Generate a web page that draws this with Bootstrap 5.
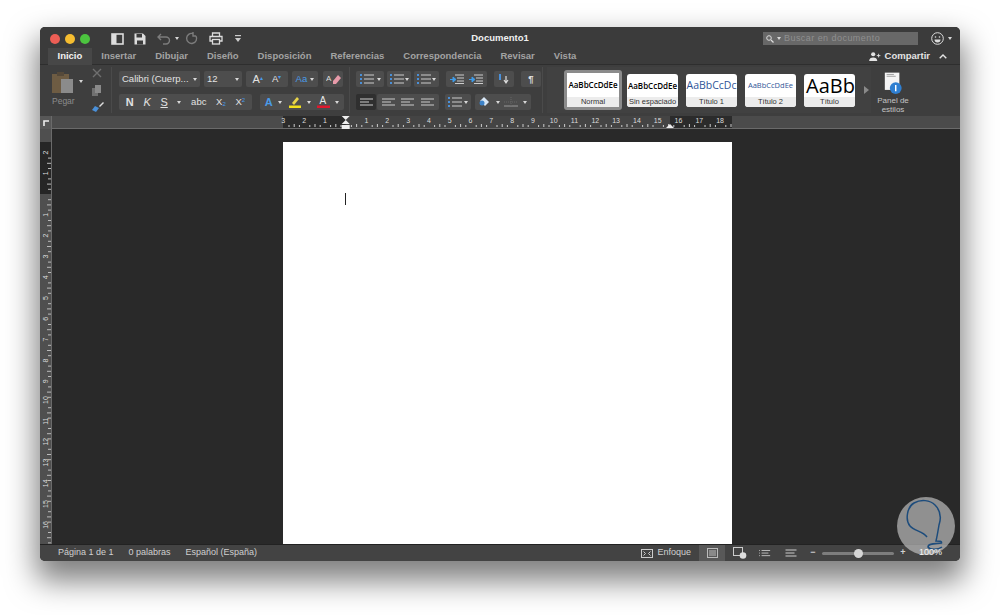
<!DOCTYPE html>
<html lang="es">
<head>
<meta charset="UTF-8">
<title>Documento1</title>
<link rel="stylesheet" href="https://cdn.jsdelivr.net/npm/bootstrap@5.3.0/dist/css/bootstrap.min.css">
<style>
html, body { height: 615px; overflow: hidden; background: #fff; }
body { font-family: "Liberation Sans", Arial, sans-serif; padding: 27px 40px 0; }
svg { display: block; }
.word-win { width: 920px; height: 534px; border-radius: 5px; overflow: hidden; background: #292929; box-shadow: 0 16px 30px 4px rgba(0,0,0,.5); position: relative; color: #d8d8d8; }
.title-row { height: 21px; background: #3b3b3b; display: grid; grid-template-columns: 1fr auto 1fr; align-items: center; flex: none; padding-top: 2px; }
.doc-title { color: #f0f0f0; font-size: 9.5px; font-weight: 700; }
.lights { margin-left: 10px; gap: 5px; }
.light-dot { width: 10px; height: 10px; border-radius: 50%; }
.dot-r { background: #ed5e55; } .dot-y { background: #f5bd30; } .dot-g { background: #4cc43f; }
.quick-bar { margin-left: 21px; }
.qa-side { margin-right: 10px; } .qa-save { margin-right: 11px; } .qa-caret { margin: 0 6px 0 4px; } .qa-redo { margin-right: 10px; } .qa-print { margin-right: 8px; }
.search-box { width: 155px; height: 13px; background: #686868; color: #8f8f8f; font-size: 9px; letter-spacing: .45px; padding-left: 3px; margin-right: 13px; gap: 3px; }
.tab-row { height: 17px; background: #3b3b3b; padding-left: 8px; flex: none; border-bottom: 1px solid #2e2e2e; }
.tab-item { padding: 0 9.5px; height: 17px; line-height: 16px; font-size: 9.5px; font-weight: 700; color: #a3a3a3; white-space: nowrap; }
.tab-on { background: #474747; color: #f2f2f2; }
.share-lnk { color: #e4e4e4; font-size: 9.5px; font-weight: 700; padding-right: 13px; height: 16px; }
.share-up { margin-left: 5px; }
.ribbon-row { height: 51px; background: #3e3e3e; flex: none; position: relative; }
.rb-clip { width: 72px; padding: 5px 0 0 12px; border-right: 1px solid #4a4a4a; flex: none; height: 46px; margin-top: 2px; }
.pegar-lbl { font-size: 8.5px; color: #8c8c8c; margin-top: 2px; }
.clip-tools { margin: -4px 0 0 9px; }
.tool-gap1 { margin-top: 7px; } .tool-gap2 { margin-top: 6px; }
.rb-font { width: 238px; padding: 4px 0 0 7px; border-right: 1px solid #4a4a4a; flex: none; height: 46px; margin-top: 2px; }
.rb-para { width: 193px; padding: 4px 0 0 6px; border-right: 1px solid #4a4a4a; flex: none; height: 46px; margin-top: 2px; }
.btn-line { height: 16px; margin-bottom: 7px; gap: 4px; }
.rb-box { height: 16px; background: #4d4d4d; border-radius: 2px; color: #e2e2e2; font-size: 9.5px; display: flex; align-items: center; justify-content: space-around; flex: none; white-space: nowrap; padding: 0 2px; }
.rb-left { justify-content: space-between; padding: 0 3px; }
.rb-dark { background: #2f2f2f; }
.w20 { width: 20px; } .w24 { width: 24px; } .w25 { width: 25px; } .w26 { width: 26px; } .w28 { width: 28px; } .w38 { width: 38px; }
.w41 { width: 41px; } .w42 { width: 42px; } .w56 { width: 56px; } .w62 { width: 62px; } .w81 { width: 81px; } .w84 { width: 84px; } .w133 { width: 133px; }
.rb-gap1 { margin-left: 1px; } .rb-gap2 { margin-left: 2px; } .rb-snug { margin-left: -3px; } .btn-line-tight { gap: 3px; }
.ink-blue { color: #4a9be8; }
.big-a { font-size: 11px; }
.rb-box sup, .rb-box sub { font-size: 6px; line-height: 0; }
.caret-mini { width: 0; height: 0; border-left: 2px solid transparent; border-right: 2px solid transparent; border-top: 3px solid #d8d8d8; flex: none; }
.gallery { width: 324px; height: 46px; margin: 2px 0 0 4px; background: #414141; flex: none; padding-left: 17px; }
.style-card { width: 51px; height: 33px; background: #fff; border-radius: 3px; overflow: hidden; flex: none; margin-right: 8px; color: #000; }
.style-card.card-on { width: 58px; height: 40px; border: 3px solid #8b8b8b; margin-right: 5px; }
.style-sample { height: 23px; line-height: 23px; overflow: hidden; white-space: nowrap; text-align: center; font-family: "Open Sans", sans-serif; font-size: 8px; font-weight: 600; }
.card-on .style-sample { height: 24px; line-height: 24px; }
.style-name { height: 10px; line-height: 10px; background: #ececec; color: #333; font-size: 7.5px; text-align: center; white-space: nowrap; overflow: hidden; }
.sample-h1 { color: #2f5597; font-size: 10.5px; font-weight: 400; }
.sample-h2 { color: #2f5597; font-size: 7.5px; font-weight: 400; }
.sample-t { font-size: 20px; font-weight: 400; text-align: left; padding-left: 2px; }
.gallery-next { width: 0; height: 0; border-top: 4px solid transparent; border-bottom: 4px solid transparent; border-left: 5px solid #8a8a8a; margin-left: 1px; flex: none; }
.panel-btn { width: 44px; font-size: 8px; line-height: 9px; color: #c4c4c4; text-align: center; flex: none; padding-top: 7px; }
.ruler-row { height: 13px; background: #4b4b4b; flex: none; border-bottom: 1px solid #6a6a6a; }
.ruler-corner { width: 12px; height: 13px; background: #575757; border-right: 1px solid #6a6a6a; flex: none; }
.doc-row { height: 415px; flex: none; }
.v-ruler { width: 12px; height: 415px; flex: none; background: #4f4f4f; border-right: 1px solid #6a6a6a; }
.work-area { padding: 13px 0 0 231px; overflow: hidden; }
.doc-page { width: 449px; height: 402px; background: #fff; padding: 51px 0 0 62px; flex: none; }
.text-caret { width: 1px; height: 12px; background: #222; }
.status-row { height: 17px; background: #434343; flex: none; font-size: 9px; color: #d0d0d0; border-top: 1px solid #222; }
.st-txt { white-space: nowrap; }
.st-pag { margin-left: 18px; } .st-pal { margin-left: 15px; } .st-idi { margin-left: 15px; }
.st-view { height: 16px; width: 26px; background: #585858; margin: 0 8px; }
.st-web { margin-right: 12px; } .st-outline { margin-right: 14px; } .st-draft { margin-right: 13px; }
.st-sign { width: 6px; text-align: center; font-weight: 700; flex: none; }
.zoom-track { width: 72px; height: 3px; background: #7d7d7d; border-radius: 2px; position: relative; margin: 0 6px; }
.zoom-knob { position: absolute; left: 32px; top: -3px; width: 9px; height: 9px; border-radius: 50%; background: #d6d6d6; }
.st-pct { position: relative; z-index: 3; margin: 0 19px 0 13px; width: 22px; text-align: right; color: #f6f6f6; }
.mark-logo { position: absolute; left: 857px; top: 470px; z-index: 2; }
</style>
</head>
<body>
<div class="word-win d-flex flex-column">
  <!-- title bar -->
  <div class="title-row">
    <div class="d-flex align-items-center">
      <div class="d-flex lights">
        <span class="light-dot dot-r"></span><span class="light-dot dot-y"></span><span class="light-dot dot-g"></span>
      </div>
      <div class="d-flex align-items-center quick-bar">
        <svg class="qa-side" width="13" height="12" viewBox="0 0 13 12"><rect x="1" y="1" width="11" height="10" fill="none" stroke="#ddd" stroke-width="1.6"/><rect x="1" y="1" width="4.500" height="10" fill="#ddd"/></svg>
        <svg class="qa-save" width="12" height="12" viewBox="0 0 12 12"><path d="M.5.5h8.500l2.500 2.500v8.500H.5z" fill="#ddd"/><rect x="2.500" y="1" width="5.500" height="3.500" fill="#3b3b3b"/><rect x="3" y="7.500" width="6" height="4" fill="#3b3b3b"/></svg>
        <svg width="14" height="13" viewBox="0 0 14 13"><path d="M4 2L1 5l3 3M1.500 5H9a3.500 3.500 0 0 1 0 7H6" fill="none" stroke="#7c7c7c" stroke-width="1.400"/></svg>
        <span class="caret-mini qa-caret"></span>
        <svg class="qa-redo" width="14" height="14" viewBox="0 0 14 14"><path d="M11 4a5 5 0 1 1-3-2.400M8 0v4h3" fill="none" stroke="#7c7c7c" stroke-width="1.400"/></svg>
        <svg class="qa-print" width="14" height="13" viewBox="0 0 14 13"><path d="M3.500 4V1h7v3M3 9H1V4.500h12V9h-2" fill="none" stroke="#ddd" stroke-width="1.300"/><rect x="3.500" y="7.500" width="7" height="4.500" fill="none" stroke="#ddd" stroke-width="1.300"/></svg>
        <svg class="ms-1" width="6" height="7" viewBox="0 0 6 7"><rect y="0" width="6" height="1.200" fill="#ccc"/><path d="M0 3h6L3 7z" fill="#ccc"/></svg>
      </div>
    </div>
    <div class="doc-title">Documento1</div>
    <div class="d-flex align-items-center justify-content-end">
      <div class="search-box d-flex align-items-center">
        <svg width="8" height="8" viewBox="0 0 8 8"><circle cx="3" cy="3" r="2.300" fill="none" stroke="#ddd" stroke-width="1"/><path d="M5 5l2.500 2.500" stroke="#ddd" stroke-width="1.200"/></svg>
        <span class="caret-mini"></span><span>Buscar en documento</span>
      </div>
      <svg width="13" height="13" viewBox="0 0 13 13"><circle cx="6.500" cy="6.500" r="5.800" fill="none" stroke="#ddd"/><circle cx="4.500" cy="5" r=".8" fill="#ddd"/><circle cx="8.500" cy="5" r=".8" fill="#ddd"/><path d="M3.500 7.500a3 3 0 0 0 6 0z" fill="#ddd"/></svg>
      <span class="caret-mini ms-1 me-2"></span>
    </div>
  </div>
  <!-- tabs -->
  <div class="tab-row d-flex align-items-start">
    <div class="tab-item tab-on">Inicio</div>
    <div class="tab-item">Insertar</div>
    <div class="tab-item">Dibujar</div>
    <div class="tab-item">Diseño</div>
    <div class="tab-item">Disposición</div>
    <div class="tab-item">Referencias</div>
    <div class="tab-item">Correspondencia</div>
    <div class="tab-item">Revisar</div>
    <div class="tab-item">Vista</div>
    <div class="share-lnk ms-auto d-flex align-items-center gap-1">
      <svg width="12" height="9" viewBox="0 0 13 10"><circle cx="4.500" cy="2.500" r="2.300" fill="#e4e4e4"/><path d="M0 10c0-3 2-4 4.500-4S9 7 9 10z" fill="#e4e4e4"/><path d="M10.500 2v4M8.500 4h4" stroke="#e4e4e4"/></svg>
      <span>Compartir</span>
      <svg class="share-up" width="8" height="5" viewBox="0 0 8 5"><path d="M.7 4.300L4 1l3.300 3.300" fill="none" stroke="#e4e4e4" stroke-width="1.400"/></svg>
    </div>
  </div>
  <!-- ribbon -->
  <div class="ribbon-row d-flex">
    <div class="rb-clip d-flex">
      <div>
        <svg width="23" height="21" viewBox="0 0 23 21"><rect x="0" y="2" width="17" height="19" fill="#6e5c43"/><rect x="5" y="0" width="7" height="4" fill="#55493a"/><rect x="9" y="7" width="12" height="14" fill="#8b8b8b"/></svg>
        <div class="pegar-lbl">Pegar</div>
      </div>
      <span class="caret-mini ms-1 mt-2"></span>
      <div class="clip-tools">
        <svg width="10" height="10" viewBox="0 0 10 10"><path d="M1 1l8 8M9 1L1 9" stroke="#6f6f6f" stroke-width="1.400"/></svg>
        <svg class="tool-gap1" width="10" height="11" viewBox="0 0 10 11"><rect x="0" y="3" width="6" height="8" fill="#707070"/><rect x="3" y="0" width="6" height="8" fill="#8a8a8a"/></svg>
        <svg class="tool-gap2" width="12" height="10" viewBox="0 0 12 10"><path d="M7 4l4-4 1 1-4 4z" fill="#ddd"/><path d="M0 8l3-4 4 2-3 4z" fill="#4a90d9"/></svg>
      </div>
    </div>
    <div class="rb-font">
      <div class="d-flex btn-line">
        <div class="rb-box rb-left w81"><span>Calibri (Cuerp...</span><span class="caret-mini"></span></div>
        <div class="rb-box rb-left w38"><span>12</span><span class="caret-mini"></span></div>
        <div class="rb-box w42"><span class="big-a">A<sup class="ink-blue">▴</sup></span><span>A<sup class="ink-blue">▾</sup></span></div>
        <div class="rb-box w26"><span class="ink-blue">Aa</span><span class="caret-mini"></span></div>
        <div class="rb-box w20 rb-gap1"><svg width="15" height="11" viewBox="0 0 15 11"><path d="M7 7l5-6 3 3-5 6H7z" fill="#e79aa9"/><text x="0" y="7" font-size="8" fill="#ddd">A</text></svg></div>
      </div>
      <div class="d-flex btn-line">
        <div class="rb-box w133">
          <b class="big-a">N</b><i class="big-a">K</i><u class="big-a">S</u><span class="caret-mini"></span><span>abc</span>
          <span>X<sub class="ink-blue">2</sub></span><span>X<sup class="ink-blue">2</sup></span>
        </div>
        <div class="rb-box w84 ms-1">
          <b class="ink-blue big-a">A</b><span class="caret-mini"></span>
          <svg width="14" height="12" viewBox="0 0 14 12"><path d="M4 7l5-6 2 2-5 6z" fill="#e8d44a"/><rect x="1" y="9.500" width="12" height="2.500" fill="#f2e01c"/></svg><span class="caret-mini"></span>
          <svg width="13" height="12" viewBox="0 0 13 12"><text x="2.500" y="8" font-size="10" fill="#e8e8e8">A</text><rect x="0" y="9.500" width="13" height="2.500" fill="#e0182d"/></svg><span class="caret-mini"></span>
        </div>
      </div>
    </div>
    <div class="rb-para">
      <div class="d-flex btn-line btn-line-tight">
        <div class="rb-box w28"><svg width="14" height="10"><use href="#ic-list"/></svg><span class="caret-mini"></span></div>
        <div class="rb-box w24"><svg width="14" height="10"><use href="#ic-list"/></svg><span class="caret-mini"></span></div>
        <div class="rb-box w25"><svg width="14" height="10"><use href="#ic-list"/></svg><span class="caret-mini"></span></div>
        <div class="rb-box w41 ms-1"><svg width="14" height="10"><use href="#ic-indent"/></svg><svg width="14" height="10"><use href="#ic-indent"/></svg></div>
        <div class="rb-box w20 ms-1"><svg width="12" height="12" viewBox="0 0 12 12"><path d="M2 1v6" stroke="#4a90d9" stroke-width="2"/><path d="M8 3v6M6 7l2 3 2-3" stroke="#ddd" fill="none" stroke-width="1.200"/></svg></div>
        <div class="rb-box w20 ms-1 fw-bold">¶</div>
      </div>
      <div class="d-flex btn-line">
        <div class="rb-box w20 rb-dark"><svg width="13" height="9"><use href="#ic-align"/></svg></div>
        <div class="rb-box w62 rb-snug"><svg width="13" height="9"><use href="#ic-align"/></svg><svg width="13" height="9"><use href="#ic-align"/></svg><svg width="13" height="9"><use href="#ic-align"/></svg></div>
        <div class="rb-box w26 rb-gap2"><svg width="14" height="10"><use href="#ic-list"/></svg><span class="caret-mini"></span></div>
        <div class="rb-box w56"><svg width="12" height="12" viewBox="0 0 12 12"><path d="M5 1l5 5-4 4-5-5z" fill="#d7e6f5"/><circle cx="3" cy="7" r="2.500" fill="#3c82c8"/></svg><span class="caret-mini"></span><svg width="14" height="10" viewBox="0 0 14 10"><path d="M0 9h14" stroke="#999"/><path d="M0 5h14M7 0v10" stroke="#666" stroke-dasharray="1 1"/></svg><span class="caret-mini"></span></div>
      </div>
    </div>
    <div class="gallery d-flex align-items-center">
      <div class="style-card card-on"><div class="style-sample">AaBbCcDdEe</div><div class="style-name">Normal</div></div>
      <div class="style-card"><div class="style-sample">AaBbCcDdEe</div><div class="style-name">Sin espaciado</div></div>
      <div class="style-card"><div class="style-sample sample-h1">AaBbCcDc</div><div class="style-name">Título 1</div></div>
      <div class="style-card"><div class="style-sample sample-h2">AaBbCcDdEe</div><div class="style-name">Título 2</div></div>
      <div class="style-card"><div class="style-sample sample-t">AaBb(</div><div class="style-name">Título</div></div>
      <span class="gallery-next"></span>
    </div>
    <div class="panel-btn">
      <svg class="mx-auto" width="20" height="24" viewBox="0 0 22 25"><rect x="2" y="0" width="16" height="19" fill="#f4f4f4"/><path d="M4 2h8M4 4h10" stroke="#999"/><circle cx="14" cy="17" r="6.500" fill="#2f7fd1"/><path d="M14 13.500v7" stroke="#fff" stroke-width="1.600"/></svg>
      <div>Panel de estilos</div>
    </div>
  </div>
  <!-- horizontal ruler -->
  <div class="ruler-row d-flex">
    <div class="ruler-corner d-flex align-items-center justify-content-center"><svg width="6" height="6" viewBox="0 0 6 6"><path d="M1 6V1h5" fill="none" stroke="#eee" stroke-width="1.600"/></svg></div>
    <svg id="hruler" width="908" height="13"></svg>
  </div>
  <!-- document area -->
  <div class="doc-row d-flex">
    <svg id="vruler" class="v-ruler" width="12" height="415"></svg>
    <div class="work-area flex-grow-1 d-flex">
      <div class="doc-page"><div class="text-caret"></div></div>
    </div>
  </div>
  <!-- status bar -->
  <div class="status-row d-flex align-items-center">
    <span class="st-txt st-pag">Página 1 de 1</span>
    <span class="st-txt st-pal">0 palabras</span>
    <span class="st-txt st-idi">Español (España)</span>
    <div class="ms-auto d-flex align-items-center">
      <svg class="me-1" width="12" height="9" viewBox="0 0 12 9"><rect x=".5" y=".5" width="11" height="8" fill="none" stroke="#ccc"/><path d="M2.500 2.500l2 2-2 2M9.500 2.500l-2 2 2 2" fill="none" stroke="#ccc"/></svg>
      <span class="st-txt">Enfoque</span>
      <div class="st-view d-flex align-items-center justify-content-center"><svg width="11" height="10" viewBox="0 0 11 10"><rect x=".5" y=".5" width="10" height="9" fill="none" stroke="#bbb"/><path d="M2 3h7M2 5h7M2 7h7" stroke="#bbb"/></svg></div>
      <svg class="st-web" width="14" height="12" viewBox="0 0 14 12"><rect x=".5" y=".5" width="9" height="8" fill="none" stroke="#ccc"/><circle cx="10" cy="8.500" r="3.300" fill="#ddd"/></svg>
      <svg class="st-outline" width="12" height="9" viewBox="0 0 14 9"><path d="M3 1h10M3 4h8M3 7h10M0 1h1M0 4h1M0 7h1" stroke="#ccc"/></svg>
      <svg class="st-draft" width="12" height="9" viewBox="0 0 11 9"><path d="M0 1h11M0 4h9M0 7h11" stroke="#ccc" stroke-width="1.200"/></svg>
      <span class="st-sign">−</span>
      <div class="zoom-track"><span class="zoom-knob"></span></div>
      <span class="st-sign">+</span>
      <span class="st-txt st-pct">100%</span>
    </div>
  </div>
  <svg class="mark-logo" width="58" height="58" viewBox="0 0 58 58">
    <circle cx="29" cy="29" r="29" fill="#c8c8c8" fill-opacity=".65"/>
    <path d="M30 40C26 34 17 34 13 29C8 23 10 10 17 6C24 2 33 3 38 8C44 14 44 22 42 28C41 34 40 40 39 44C42 44 45 44 44.500 46C40 47 31 46 31 50C33 53 41 53 45 50" fill="none" stroke="#1d4c7c" stroke-width="1.500"/>
  </svg>
</div>

<svg width="0" height="0" class="position-absolute">
  <symbol id="ic-list" viewBox="0 0 14 10"><path d="M0 1h2M0 5h2M0 9h2" stroke="#4a90d9" stroke-width="2"/><path d="M4 1h10M4 5h10M4 9h10" stroke="#ccc"/></symbol>
  <symbol id="ic-indent" viewBox="0 0 14 10"><path d="M5 1h9M7 4h7M7 7h7M5 9.500h9" stroke="#ccc"/><path d="M0 5.500h4M3 3l3 2.500L3 8z" stroke="#3f9be8" fill="#3f9be8"/></symbol>
  <symbol id="ic-align" viewBox="0 0 13 9"><path d="M0 1h13M0 4h9M0 7h13" stroke="#ccc"/></symbol>
</svg>

<script src="https://cdn.jsdelivr.net/npm/bootstrap@5.3.0/dist/js/bootstrap.bundle.min.js"></script>
<script>
  // Rulers: one number every 20.8px, origin at the left/top margin of the page
  const step = 20.8;
  const originX = 345.7 - 52, pageL = 283 - 52, pageR = 732 - 52, marginR = 670 - 52;
  let h = `<rect x="${pageL}" width="${pageR - pageL}" height="12" fill="#2b2b2b"/><rect x="${originX}" width="${marginR - originX}" height="12" fill="#444"/>`;
  for (let i = -3; i <= 18; i++) {
    const x = originX + i * step;
    if (i !== 0) h += `<text x="${x}" y="7" font-size="7" fill="#ddd" text-anchor="middle">${Math.abs(i)}</text>`;
    for (let q = 1; q < 4; q++) {
      const tx = x + q * step / 4;
      if (tx < pageR) h += `<rect x="${tx}" y="${q === 2 ? 8 : 9}" width="1" height="${q === 2 ? 3 : 2}" fill="#ccc"/>`;
    }
  }
  h += `<path d="M${originX - 4} 0h8l-4 4 4 4h-8l4-4z" fill="#eee"/><rect x="${originX - 4}" y="9" width="8" height="4" fill="#eee"/><path d="M${marginR - 4} 12l4-4 4 4z" fill="#eee"/>`;
  document.getElementById('hruler').innerHTML = h;

  const originY = 65;
  let v = `<rect y="13" width="11" height="52" fill="#262626"/>`;
  for (let i = -2; i <= 16; i++) {
    const y = originY + i * step;
    if (i !== 0) v += `<text x="0" y="0" transform="translate(8 ${y + 2}) rotate(-90)" font-size="7" fill="#ddd">${Math.abs(i)}</text>`;
    for (let q = 1; q < 4; q++) {
      v += `<rect x="${q === 2 ? 7 : 8}" y="${y + q * step / 4}" width="${q === 2 ? 4 : 3}" height="1" fill="#bbb"/>`;
    }
  }
  document.getElementById('vruler').innerHTML = v;
</script>
</body>
</html>
